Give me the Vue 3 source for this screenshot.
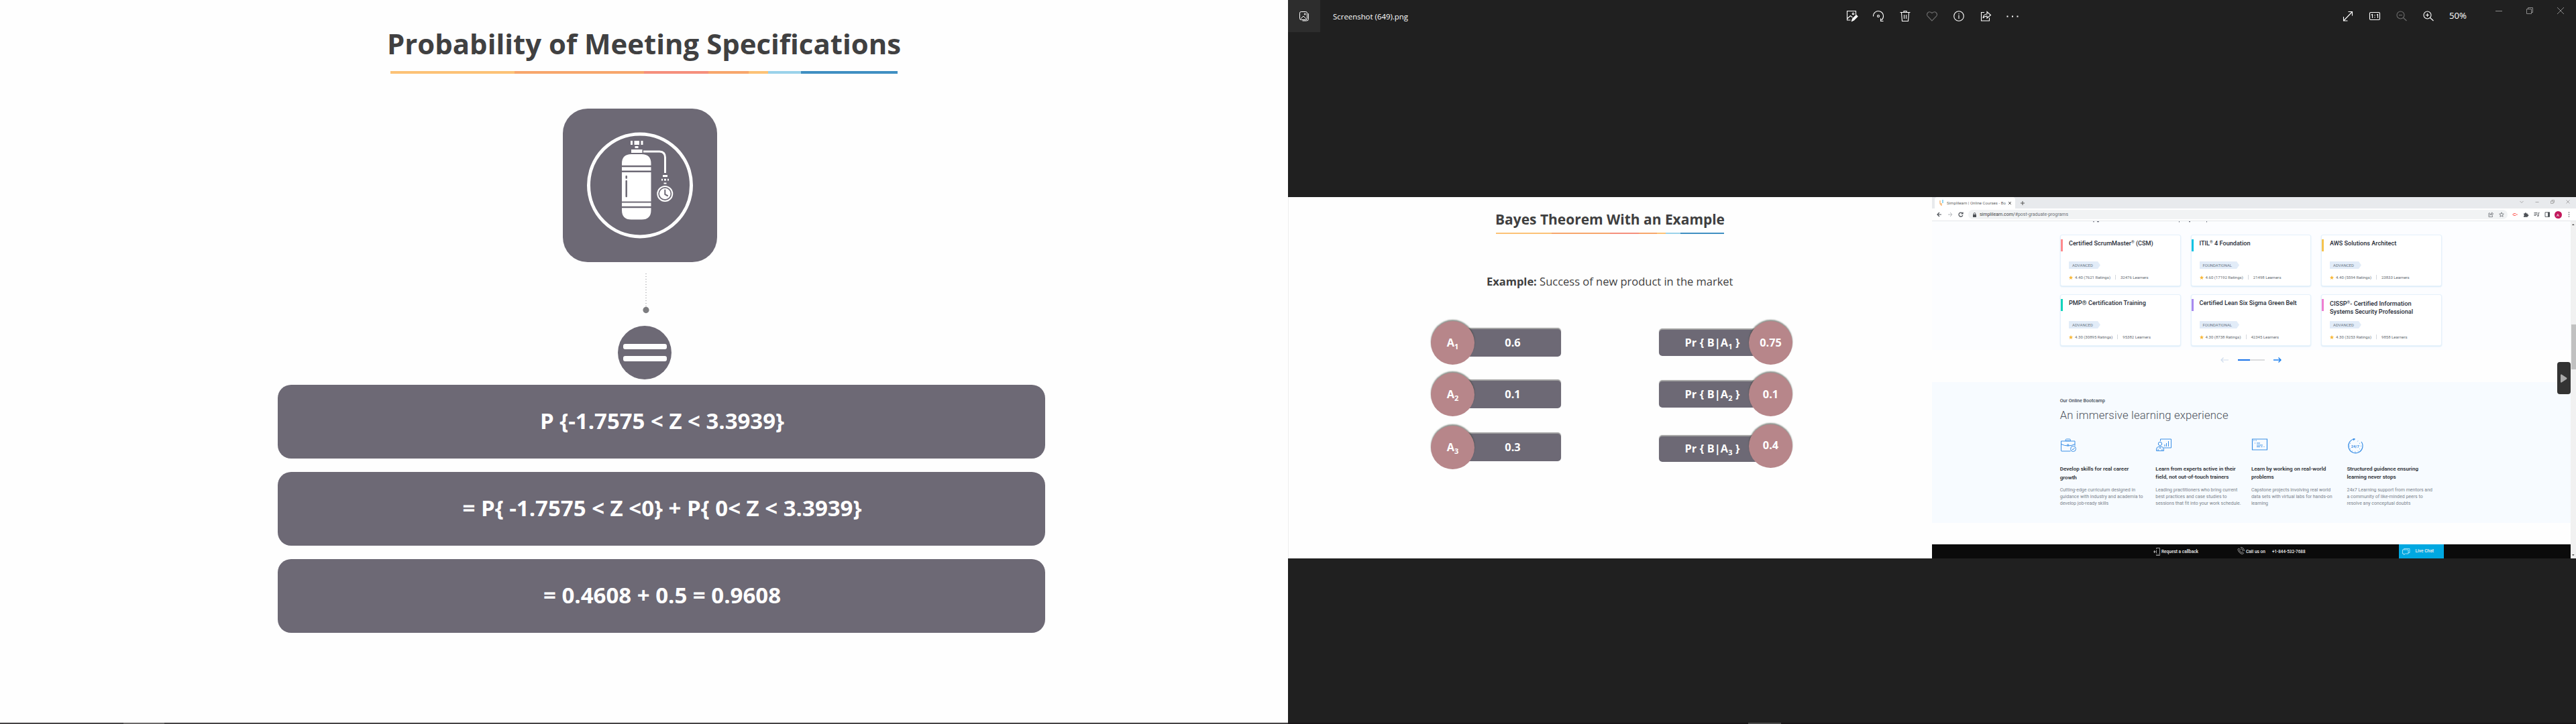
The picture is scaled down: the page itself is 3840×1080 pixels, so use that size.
<script setup>
// Sizes a line of text so that it fills the given width in px. The font size takes
// up to a few percent of the difference and letter spacing takes the rest; with
// the "track" modifier the font size stays as styled.
const vFit = {
  mounted(el, { value, modifiers }) {
    const measure = () => el.getBoundingClientRect().width
    if (!modifiers.track) {
      const ratio = Math.min(1.1, Math.max(0.92, value / measure()))
      el.style.fontSize = parseFloat(getComputedStyle(el).fontSize) * ratio + 'px'
    }
    el.style.letterSpacing = (value - measure()) / el.textContent.trim().length + 'px'
  }
}

const results = [
  { text: 'P {-1.7575 < Z < 3.3939}', w: 364 },
  { text: '= P{ -1.7575 < Z <0} + P{ 0< Z < 3.3939}', w: 595 },
  { text: '= 0.4608 + 0.5 = 0.9608', w: 354 }
]
const priors = ['0.6', '0.1', '0.3']
const likelihoods = ['0.75', '0.1', '0.4']

const cards = [
  { t: ['Certified ScrumMaster', '®', ' (CSM)'], w: 125.5, c: '#ff8a8c', level: 'ADVANCED', lw: 31, r: '4.40 (7621 Ratings)', rw: 53, n: '32476 Learners', nw: 41.7 },
  { t: ['ITIL', '®', ' 4 Foundation'], w: 76, c: '#10c3e2', level: 'FOUNDATIONAL', lw: 43.6, r: '4.60 (17192 Ratings)', rw: 56.3, n: '21498 Learners', nw: 41.7 },
  { t: ['AWS Solutions Architect', '', ''], w: 99.3, c: '#f5c34e', level: 'ADVANCED', lw: 31, r: '4.40 (5594 Ratings)', rw: 53, n: '23833 Learners', nw: 41.7 },
  { t: ['PMP® Certification Training', '', ''], w: 114.6, c: '#12d4bb', level: 'ADVANCED', lw: 31, r: '4.30 (30895 Ratings)', rw: 56.3, n: '95382 Learners', nw: 41.7 },
  { t: ['Certified Lean Six Sigma Green Belt', '', ''], w: 144.8, c: '#a98aee', level: 'FOUNDATIONAL', lw: 43.6, r: '4.30 (8738 Ratings)', rw: 53, n: '42345 Learners', nw: 41.7 },
  { t: ['CISSP', '®', '- Certified Information'], w: 121.3, t2: 'Systems Security Professional', w2: 124, c: '#ee7fd0', level: 'ADVANCED', lw: 31, r: '4.30 (3253 Ratings)', rw: 53, n: '9858 Learners', nw: 38.6 }
]

const features = [
  { icon: 'case', h: [['Develop skills for real career', 102.7], ['growth', 25.2]], p: [['Cutting-edge curriculum designed in', 112.4], ['guidance with industry and academia to', 123.8], ['develop job-ready skills', 72.5]] },
  { icon: 'teach', h: [['Learn from experts active in their', 119.5], ['field, not out-of-touch trainers', 108.9]], p: [['Leading practitioners who bring current', 122], ['best practices and case studies to', 106.2], ['sessions that fit into your work schedule.', 127]] },
  { icon: 'code', h: [['Learn by working on real-world', 111.4], ['problems', 33.8]], p: [['Capstone projects involving real world', 118.4], ['data sets with virtual labs for hands-on', 120.8], ['learning', 25.2]] },
  { icon: 'clock', h: [['Structured guidance ensuring', 106.5], ['learning never stops', 73.2]], p: [['24x7 Learning support from mentors and', 127.5], ['a community of like-minded peers to', 113.2], ['resolve any conceptual doubts', 94.8]] }
]
</script>

<template>
  <div class="desk">
    <section class="slide">
      <h1><span v-fit="766">Probability of Meeting Specifications</span></h1>
      <div class="rule"></div>

      <svg class="tank" width="230" height="229" viewBox="0 0 230 229">
        <rect width="230" height="229" rx="37" fill="#6d6975" />
        <circle cx="115" cy="114.4" r="76.5" fill="none" stroke="#fff" stroke-width="5" />
        <g fill="#fff">
          <path d="M101 48h3v6h-3zM106.500 48h7.500v6h-7.500zM116.500 48h3v6h-3zM107.500 56h5v3h-5zM102 61h16.500v5h-16.500z" />
          <path d="M88 84.700v-2.700q0-14 14-14h15.500q14 0 14 14v2.700zM88 87.200h43.500v5.300h-43.500zM88 95h43.500v43.500h-43.500zM88 140.500h43.500v5.300h-43.500zM88 148.300h43.500v3.200q0 14-14 14h-15.500q-14 0-14-14z" />
          <path d="M149 99h7v3h-7zM147 104.800h2v2.600h-2zM151 104.800h3v2.600h-3zM156 104.800h2v2.600h-2zM150.500 110.500h4v2h-4z" />
        </g>
        <path d="M120 64h24q8.500 0 8.500 9v23" fill="none" stroke="#fff" stroke-width="3" />
        <path d="M94.700 101v2.500M94.700 108v23" stroke="#6d6975" stroke-width="2.500" stroke-linecap="round" />
        <circle cx="152.300" cy="127" r="11" fill="none" stroke="#fff" stroke-width="2" />
        <circle cx="152.300" cy="127" r="8.300" fill="#fff" />
        <path d="M152.300 121.500v6.500l3.700 2" fill="none" stroke="#6d6975" stroke-width="2" stroke-linecap="round" />
      </svg>

      <svg class="link" width="10" height="62" viewBox="0 0 10 62">
        <path d="M5 1v50" stroke="#85858a" stroke-width="1" stroke-dasharray="1 3" />
        <ellipse cx="5" cy="55.500" rx="4.600" ry="4.700" fill="#7d7d80" />
      </svg>
      <div class="equals"><i></i><i></i></div>

      <div v-for="r in results" :key="r.text" class="result"><span v-fit="r.w">{{ r.text }}</span></div>
      <div class="scrub"><i></i></div>
    </section>

    <section class="viewer">
      <header class="bar">
        <div class="home">
          <svg width="16" height="16" viewBox="0 0 16 16" fill="none" stroke="#fff"><rect x="1.500" y="1.500" width="11" height="12" rx="2" /><path d="M2.500 12.500l4.500-4.500 4.500 4.500M14.500 4v8.500q0 2.500-3 2.500h-6" /><circle cx="9.300" cy="5" r="1" /></svg>
        </div>
        <div class="name"><span v-fit="112">Screenshot (649).png</span></div>
        <div class="tools">
          <svg viewBox="0 0 20 20"><path d="M16.500 8v-5.500h-13v13.500h5M3.500 14l5-4.500 3 2.500" /><circle cx="12.500" cy="6.500" r="1.300" /><path d="M10.500 17.500l1-3.500 5.500-5.500 2 2-5.500 5.500z" fill="#fff" /></svg>
          <svg viewBox="0 0 20 20"><path d="M2.500 10.500a7.500 7.500 0 1 1 12 5.500M13.500 13.500v4h4" /><circle cx="10" cy="10" r="1.500" /></svg>
          <svg viewBox="0 0 20 20"><path d="M2.500 4.500h15M8 4v-1.500h4v1.500M4.500 5l1 12.500h9l1-12.500M8.500 8v6M11.500 8v6" /></svg>
          <svg viewBox="0 0 20 20" class="dim"><path d="M10 17l-6.300-6.500c-3-3.500 1-9.500 6.300-5 5.300-4.500 9.300 1.500 6.300 5z" /></svg>
          <svg viewBox="0 0 20 20"><circle cx="10" cy="10" r="7.300" /><path d="M10 8.500v5.500M10 6v1.300" /></svg>
          <svg viewBox="0 0 20 20"><path d="M8 4.500h-4.500v12.500h12v-4.500M6 13q.5-6 6-6v-3.500l5.500 5-5.500 4.500v-3q-4 0-6 3z" /></svg>
          <svg viewBox="0 0 20 20"><path d="M1.500 9.500h2v2h-2zM9 9.500h2v2h-2zM16.500 9.500h2v2h-2z" fill="#fff" stroke="none" /></svg>
        </div>
        <div class="zooms">
          <svg viewBox="0 0 20 20"><path d="M4 16.500l12.500-13M10.500 3.500h6v6M3.500 11v6h6" /></svg>
          <svg viewBox="0 0 20 20"><rect x="2.500" y="4.500" width="15" height="11" rx="1.500" /><path d="M5 8.300l1.500-.8v5.500M13 8.300l1.500-.8v5.500M10 8v1.300M10 11.200v1.300" /></svg>
          <svg viewBox="0 0 20 20" class="dim"><circle cx="8.500" cy="8.500" r="5.500" /><path d="M12.500 12.500l5 4.500M6 8.500h5" /></svg>
          <svg viewBox="0 0 20 20"><circle cx="8.500" cy="8.500" r="5.500" /><path d="M12.500 12.500l5 4.500M6 8.500h5M8.500 6v5" /></svg>
        </div>
        <div class="pct"><span v-fit="26">50%</span></div>
        <div class="wins">
          <svg viewBox="0 0 12 12"><path d="M1 6.500h10" /></svg>
          <svg viewBox="0 0 12 12"><path d="M1.500 3.500h7v7h-7zM3.500 3.500v-2h7v7h-2" /></svg>
          <svg viewBox="0 0 12 12"><path d="M1 1l10 10M11 1l-10 10" /></svg>
        </div>
      </header>

      <div class="photo">
        <div class="bayes">
          <h2><span v-fit="342">Bayes Theorem With an Example</span></h2>
          <div class="rule small"></div>
          <p class="example"><span v-fit="367.500"><b>Example:</b> Success of new product in the market</span></p>
          <div class="pairs">
            <div class="priors">
              <div v-for="(v, i) in priors" :key="i" class="pair">
                <div class="disc"><span>A<sub>{{ i + 1 }}</sub></span></div>
                <div class="pill">{{ v }}</div>
              </div>
            </div>
            <div class="likes">
              <div v-for="(v, i) in likelihoods" :key="i" class="pair">
                <div class="pill"><span v-fit.track="82">Pr { B|A<sub>{{ i + 1 }}</sub> }</span></div>
                <div class="disc">{{ v }}</div>
              </div>
            </div>
          </div>
        </div>

        <div class="browser">
          <div class="tabs">
            <div class="tab">
              <svg width="6" height="9" viewBox="0 0 6 9" fill="none" stroke-width="1.300"><path d="M1 1v4q0 2 2 2M3 5v4" stroke="#f6b26b" /><path d="M5 0v5" stroke="#5cc0ea" /></svg>
              <span class="tabname"><span v-fit="88">Simplilearn | Online Courses - Bo</span></span>
              <svg width="4" height="4" viewBox="0 0 4 4" stroke="#555"><path d="M0 0l4 4M4 0l-4 4" /></svg>
            </div>
            <svg class="plus" width="6" height="6" viewBox="0 0 6 6" stroke="#555"><path d="M3 0v6M0 3h6" /></svg>
            <div class="chromewins">
              <svg viewBox="0 0 6 6"><path d="M.5 2l2.500 2.500 2.500-2.500" /></svg>
              <svg viewBox="0 0 6 6"><path d="M.5 3.500h5" /></svg>
              <svg viewBox="0 0 6 6"><path d="M.5 2h3.500v3.500h-3.500zM2 2v-1.500h3.500v3.500h-1.500" /></svg>
              <svg viewBox="0 0 6 6"><path d="M.5.5l5 5M5.500.5l-5 5" /></svg>
            </div>
          </div>
          <div class="address">
            <svg class="nav" width="42" height="8" viewBox="0 0 42 8" fill="none" stroke="#50545a"><path d="M7 4h-6M4 1l-3 3 3 3" stroke-width="1.200" /><path d="M17 4h6M20 1l3 3-3 3" stroke="#b5b8bc" /><path d="M38.500 2.500a3 3 0 1 0 .3 2.500M39 .5v2.500h-2.500" stroke-width="1.200" /></svg>
            <div class="pillbox">
              <svg width="5" height="7" viewBox="0 0 5 7"><path d="M0 3h5v4h-5z" fill="#4d5156" /><path d="M1.200 3v-1.200a1.300 1.300 0 0 1 2.600 0v1.200" fill="none" stroke="#4d5156" /></svg>
              <span class="url"><span v-fit="132">simplilearn.com/<em>#post-graduate-programs</em></span></span>
              <svg class="inbar" width="24" height="8" viewBox="0 0 24 8" fill="none" stroke="#777b80" stroke-width=".9"><path d="M3 2h-2v5.500h5.500v-2M2.500 5q.5-2.500 3-2.500v-1.500l2.300 2-2.300 2v-1.200q-2 0-3 1.200z" /><path d="M20 .8l.9 2.200 2.400.2-1.800 1.600.6 2.400-2.100-1.300-2.100 1.300.6-2.400-1.800-1.600 2.400-.2z" /></svg>
            </div>
            <svg class="ext" width="58" height="8" viewBox="0 0 58 8" fill="none" stroke="#4d5156" stroke-width=".9"><path d="M0 4h1M7 4h1M2 2.500h3l1.500 1.500-1.500 1.500h-3z" stroke="#ff5b57" /><path d="M17 2.500h1.700a1.200 1.200 0 1 1 2.400 0h1.700v1.700a1.200 1.200 0 1 1 0 2.300v1.300h-5.800v-1.700a1.200 1.200 0 0 0 0-2.300z" fill="#4d5156" stroke="none" /><path d="M32.500 1.500h5M32.500 3.500h5M32.500 5.500h3M39 6v-4.500h1.500" /><circle cx="38.300" cy="6" r=".7" /><path d="M49 .8h6.500v6.500h-6.500z" /><path d="M53.500 1h2v6h-2z" fill="#4d5156" /></svg>
            <div class="avatar">A</div>
            <svg width="3" height="8" viewBox="0 0 3 8" fill="#4d5156"><circle cx="1.500" cy="1" r=".8" /><circle cx="1.500" cy="4" r=".8" /><circle cx="1.500" cy="7" r=".8" /></svg>
          </div>

          <div class="view">
            <main class="page">
              <svg class="cut" width="180" height="2" viewBox="0 0 180 2" fill="#666a78"><path d="M0 .3h2v1h-2zM6 0h3v1.300h-3zM128 0h1v1.500h-1zM143 0h2v1.200h-2zM169 0h1v1.500h-1z" /></svg>
              <div class="cards">
                <article v-for="c in cards" :key="c.t[0]" class="card">
                  <i class="mark" :style="{ background: c.c }"></i>
                  <h3>
                    <span v-fit="c.w">{{ c.t[0] }}<sup>{{ c.t[1] }}</sup>{{ c.t[2] }}</span>
                    <template v-if="c.t2"><br /><span v-fit="c.w2">{{ c.t2 }}</span></template>
                  </h3>
                  <div class="level"><span v-fit="c.lw">{{ c.level }}</span></div>
                  <div class="stats">
                    <svg width="6" height="6" viewBox="0 0 6 6"><path d="M3 0l.9 2 2.100.2-1.600 1.500.5 2.200-1.900-1.200-1.900 1.200.5-2.200-1.600-1.500 2.100-.2z" fill="#f8b93b" /></svg>
                    <span v-fit="c.rw">{{ c.r }}</span><i></i><span v-fit="c.nw">{{ c.n }}</span>
                  </div>
                </article>
              </div>
              <div class="pager">
                <svg width="12" height="8" viewBox="0 0 12 8" fill="none" stroke="#cfdcec" stroke-width="1.200"><path d="M12 4h-11M4.500.5l-3.500 3.500 3.500 3.500" /></svg>
                <div class="track"><i></i></div>
                <svg width="12" height="8" viewBox="0 0 12 8" fill="none" stroke="#1a7fee" stroke-width="1.400"><path d="M0 4h11M7.500.5l3.500 3.500-3.500 3.500" /></svg>
              </div>

              <section class="camp">
                <p class="over"><span v-fit="67.200">Our Online Bootcamp</span></p>
                <h2><span v-fit.track="251">An immersive learning experience</span></h2>
                <div class="features">
                  <div v-for="f in features" :key="f.icon" class="feature">
                    <svg width="26" height="24" viewBox="0 0 26 24" fill="none" stroke="#3b8fe6">
                      <g v-if="f.icon === 'case'"><path d="M15.500 19h-13.500q-.500 0-.500-1v-14h20.500v7M1.500 8.500q5 2.500 10 2.500 6 0 10.500-2.500M8 3.500v-1q0-1.500 1.500-1.500h4.500q1.500 0 1.500 1.500v1z" /><circle cx="11.700" cy="10" r="1.200" /><circle cx="19.500" cy="15.500" r="4" /><path d="M17.500 15.500l1.500 1.500 2.500-3" /></g>
                      <g v-else-if="f.icon === 'teach'"><path d="M7.500 4v-3h16v13h-11M14 12v-3M16.500 12v-5M19.500 12v-8" /><circle cx="7" cy="8" r="2.700" /><path d="M1.500 18.500v-2.500q0-3.500 3.500-3.500h4q3.500 0 3.500 3.500v2.500zM4 18.500v-3M10 18.500v-3M7 13v3" /></g>
                      <g v-else-if="f.icon === 'code'"><path d="M1.500 1h22v16h-22z" stroke-width="1.200" /><path d="M3 3h1M5 3h1M7 3h1M5 7h1M8 7h5M8 10h9M8 12.500h5M14.500 12.500h2M18.500 12.500h1" /></g>
                      <g v-else><path d="M10.500 1a10.600 10.600 0 1 0 11.500 4" stroke-width="1.200" /><path d="M9.500-.5l3 1.500-2.500 2" fill="#3b8fe6" /><path d="M3.500 11.300h1M21 11.300h1M12.800 19.500v1.500M5 16l1-.6M20 16l-1-.6M8 19.500l.6-1M17.500 19.500l-.6-1M5 7l1 .6M20 7l-1 .6M17 3.500l-.6 1" stroke-width=".8" /><text x="12.800" y="13.500" text-anchor="middle" font-size="5.800" font-weight="700" fill="#3b8fe6" stroke="none">24/7</text></g>
                    </svg>
                    <h4><template v-for="l in f.h" :key="l[0]"><span v-fit="l[1]">{{ l[0] }}</span><br /></template></h4>
                    <p><template v-for="l in f.p" :key="l[0]"><span v-fit="l[1]">{{ l[0] }}</span><br /></template></p>
                  </div>
                </div>
              </section>

              <footer class="contact">
                <svg class="mobile" width="10" height="12" viewBox="0 0 10 12" fill="none" stroke="#bbb" stroke-width=".8"><path d="M4.500 2v-1.500h5v11h-5v-1.500M4.500 3.500v5M6 10h2M0 6h3M1.500 4v4M2.700 5v2" /></svg>
                <span v-fit="55">Request a callback</span>
                <svg class="phone" width="11" height="11" viewBox="0 0 11 11" fill="none" stroke="#bbb" stroke-width=".8"><path d="M2.500 2l2 2-1 1.500q1 2 2.500 2.700l1.500-.9 2 2q-1.500 1.700-3.500.8-4-2-5-6-.2-1.500 1.500-2.100zM5 .5q5 0 5.500 5.500M5.500 2.500q3 .2 3.200 3.500" /></svg>
                <span v-fit="29">Call us on</span>
                <span class="num"><span v-fit="49.500">+1-844-532-7688</span></span>
                <div class="chat">
                  <svg width="12" height="10" viewBox="0 0 12 10" fill="none" stroke="#c5eefa" stroke-width=".8"><path d="M.5 2h8.500v6h-4.500l-2 1.500v-1.500h-2zM2.500 2v-1.500h8.500v6h-2" /></svg>
                  <span v-fit="27.500">Live Chat</span>
                </div>
              </footer>
            </main>
            <aside class="scroll">
              <svg width="7" height="10" viewBox="0 0 7 10"><path d="M2 6l1.800-2 1.800 2z" fill="#444" /></svg>
              <i></i>
              <svg width="7" height="10" viewBox="0 0 7 10"><path d="M2 4l1.800 2 1.800-2z" fill="#444" /></svg>
            </aside>
          </div>
          <div class="next"><svg width="10" height="13" viewBox="0 0 10 13"><path d="M0 1.500q0-1.500 1.500-1l7.500 5q1 1 0 2l-7.500 5q-1.500.500-1.500-1z" fill="#aaa" /></svg></div>
        </div>
      </div>
      <div class="scrub dark"><i></i></div>
    </section>
  </div>
</template>

<style>
body { margin: 0; background: #fff; }
</style>

<style scoped>
* { box-sizing: border-box; }
h1, h2, h3, h4, p { margin: 0; font-weight: inherit; }
svg { display: block; flex: none; }
span { white-space: pre; }
.desk { display: flex; width: 3840px; height: 1080px; overflow: hidden; font-family: "Open Sans", "Noto Sans", sans-serif; }

.slide { width: 1920px; height: 1080px; display: flex; flex-direction: column; background: #fefefe; }
.slide h1 { height: 60px; margin: 35px 0 11px 577px; line-height: 60px; font-size: 41.5px; font-weight: 700; color: #404041; }
.rule { width: 756px; height: 4px; margin-left: 582px; background: linear-gradient(90deg, #fcc276 0 24.5%, #f7a66c 0 50%, #f58f7c 0 62.700%, #f7a66c 0 70.600%, #fcc276 0 74.500%, #9ad2ea 0 81%, #3f8fc2 0); }
.tank { margin: 52px 0 0 839px; }
.link { margin: 16px 0 0 957.500px; }
.equals { width: 80px; height: 80px; margin: 17px 0 8px 921px; border-radius: 50%; background: #6d6975; display: flex; flex-direction: column; align-items: center; justify-content: center; gap: 10px; }
.equals i { width: 65px; height: 8px; border-radius: 3px; background: #fefefe; }
.result { height: 110px; width: 1144px; margin: 0 0 20px 414px; border-radius: 20px; background: #6d6975; color: #fff; display: flex; align-items: center; justify-content: center; font-size: 32.700px; font-weight: 700; line-height: 40px; padding: 0 0 3px 2px; }
.scrub { margin-top: auto; height: 2px; background: #454344; }
.scrub i { display: block; width: 61px; height: 2px; margin-left: 184px; background: #6b6969; }
.scrub.dark { background: #171516; }
.scrub.dark i { margin-left: 686px; width: 49px; background: #4a4a4a; }

.viewer { width: 1920px; height: 1080px; display: flex; flex-direction: column; background: #202020; }
.bar { height: 48px; display: flex; color: #fff; }
.home { width: 48px; display: flex; align-items: center; justify-content: center; background: #2d2d2d; }
.name { width: 763px; padding-left: 19px; font-size: 12px; line-height: 49px; }
.tools, .zooms { display: flex; align-items: center; gap: 20px; padding-left: 19px; }
.tools svg, .zooms svg { width: 20px; height: 20px; fill: none; stroke: #fff; stroke-width: 1.100; }
.tools .dim, .zooms .dim { stroke: #6e6e6e; }
.zooms { margin-left: 480px; padding: 0; }
.pct { margin-left: 21px; width: 68px; font-size: 13px; line-height: 46px; }
.wins { display: flex; gap: 34px; padding-top: 10px; }
.wins svg { width: 12px; height: 12px; fill: none; stroke: #8b8b8b; }

.photo { margin-top: 246px; height: 539px; display: flex; }
.bayes { width: 960px; background: #fefefe; border-left: 1px solid #eee; display: flex; flex-direction: column; color: #3f3f40; }
.bayes h2 { height: 30px; margin: 18px 0 5px 308px; line-height: 30px; font-size: 20.700px; font-weight: 700; }
.rule.small { width: 340px; height: 2px; margin-left: 309px; }
.example { height: 30px; margin: 56px 0 0 295px; line-height: 30px; font-size: 17.300px; }
.pairs { display: flex; margin: 44px 0 0 212px; }
.priors { width: 340px; }
.pair { display: flex; align-items: flex-start; height: 77px; color: #fff; font-size: 16.300px; font-weight: 700; }
.pair:nth-child(2) { height: 79px; }
.likes .pair:nth-child(2) { height: 76.500px; }
.disc { position: relative; width: 65px; height: 65px; border-radius: 50%; background: #b7868a; display: flex; align-items: center; justify-content: center; padding-bottom: 2px; box-shadow: 0 -2px 2px rgba(50, 60, 50, .55); }
.pill { height: 41px; width: 162px; margin: 12px 0 0 -33px; padding: 0 0 1px 18px; border-radius: 5px; background: #6d6975; display: flex; align-items: center; justify-content: center; box-shadow: 0 -2px 1px rgba(60, 60, 60, .5); }
.likes .pill { height: 38.500px; width: 167px; margin: 13px -33px 0 0; padding: 0 8px 1px 0; }
.likes .pair:nth-child(3) .pill { margin-top: 18px; }
sub { font-size: 11px; line-height: 0; vertical-align: -4px; }

.browser { position: relative; width: 960px; display: flex; flex-direction: column; background: #fff; font-family: Roboto, sans-serif; }
.tabs { height: 17px; display: flex; align-items: center; background: #e8eaed; }
.tab { width: 120px; height: 17px; margin-left: 4px; padding: 0 6px 0 7px; border-radius: 4px 4px 0 0; background: #fff; display: flex; align-items: center; font-size: 6.500px; color: #666; }
.tabname { width: 92px; margin: 0 3px 0 5px; }
.plus { margin-left: 8px; }
.chromewins { margin: -3px 9px 0 auto; display: flex; gap: 17px; }
.chromewins svg { width: 6px; height: 6px; fill: none; stroke: #999; stroke-width: .8; }
.address { height: 19px; display: flex; align-items: center; border-bottom: 1px solid #e4e7ea; padding-left: 7px; }
.nav { width: 42px; }
.pillbox { width: 804px; height: 14px; margin: 0 7px 0 5px; padding: 0 5px 0 7px; border-radius: 7px; background: #f1f3f4; display: flex; align-items: center; font-size: 7px; color: #3c4043; }
.url { margin-left: 5px; }
.url em { font-style: normal; color: #6c7075; }
.inbar { margin-left: auto; }
.avatar { width: 11px; height: 11px; margin: 0 9px 0 .5px; border-radius: 50%; background: #c2185b; color: #fff; font-size: 6px; line-height: 11px; text-align: center; }
.ext { width: 58px; margin-right: 4px; }

.view { flex: 1; display: flex; height: 503px; }
.page { width: 952px; display: flex; flex-direction: column; background: linear-gradient(#fcfdff 0 192px, #fefefe 0); }
.cut { margin-left: 240px; }
.cards { margin: 17.500px 0 0 191px; display: grid; grid-template-columns: repeat(3, 179.500px); column-gap: 15px; row-gap: 12px; }
.card { height: 77px; padding: 6.500px 0 0 0; border: 1px solid #e5f1fb; border-radius: 3px; background: #fff; box-shadow: 0 1px 2px #d6e9f8; display: grid; grid-template-columns: 12px 1fr; grid-template-rows: 33px 11px auto; }
.mark { width: 3px; height: 18px; }
.card h3 { font-size: 8.900px; line-height: 13px; font-weight: 500; color: #272c37; }
.card h3 > span, .feature span { vertical-align: top; }
sup { font-size: 6px; line-height: 0; vertical-align: 3px; }
.level, .stats { grid-column: 2; }
.level { justify-self: start; height: 11px; padding: 0 11px 0 5px; background: #e2ecf8; clip-path: polygon(0 0, calc(100% - 4px) 0, 100% 50%, calc(100% - 4px) 100%, 0 100%); font-size: 6.300px; line-height: 11px; color: #6d7886; }
.stats { display: flex; align-items: center; height: 11px; margin-top: 7px; font-size: 6.300px; color: #666b72; line-height: 11px; }
.stats svg { margin-right: 3px; }
.stats i { width: 1px; height: 7px; margin: 0 7px; background: #d5d9de; }
.pager { display: flex; align-items: center; height: 8px; margin: 17px 0 0 430px; }
.track { width: 40px; height: 2px; margin: 0 13px 0 14px; background: #dadcde; }
.track i { display: block; width: 18px; height: 2px; background: #1a73e8; }

.camp { height: 210px; margin-top: 29.500px; padding-left: 190.700px; background: #f7fbff; }
.over { padding-top: 22.500px; height: 32.500px; line-height: 10px; font-size: 6.900px; font-weight: 500; color: #444b57; }
.camp h2 { height: 24px; margin-top: 5px; line-height: 24px; font-size: 16.700px; font-weight: 300; color: #4c525c; }
.features { display: flex; margin-top: 22px; }
.feature { width: 142.600px; }
.feature h4 { margin-top: 16.800px; line-height: 12px; font-size: 7.900px; font-weight: 600; color: #2c2f35; }
.feature p { margin-top: 7.500px; line-height: 10px; font-size: 7px; color: #7b838c; }
.contact { margin-top: auto; height: 21px; display: flex; align-items: center; background: #0b0b0b; color: #eee; font-size: 6.500px; font-weight: 500; }
.mobile { margin: 0 2px 0 330px; }
.phone { margin: -3px 2px 0 58px; }
.num { margin-left: 10px; }
.chat { width: 67px; height: 21px; margin-left: 139px; padding: 0 0 0 5px; display: flex; align-items: center; gap: 8px; background: #00a8e1; }
.chat span { margin-top: -2px; }
.scroll { width: 8px; background: #f1f1f1; display: flex; flex-direction: column; }
.scroll i { width: 7px; height: 67px; margin: 144px 0 auto 1px; background: #c1c1c1; }
.next { position: absolute; left: 932px; top: 246px; width: 20px; height: 48px; border-radius: 4px; background: #333; display: flex; align-items: center; justify-content: center; }
</style>
